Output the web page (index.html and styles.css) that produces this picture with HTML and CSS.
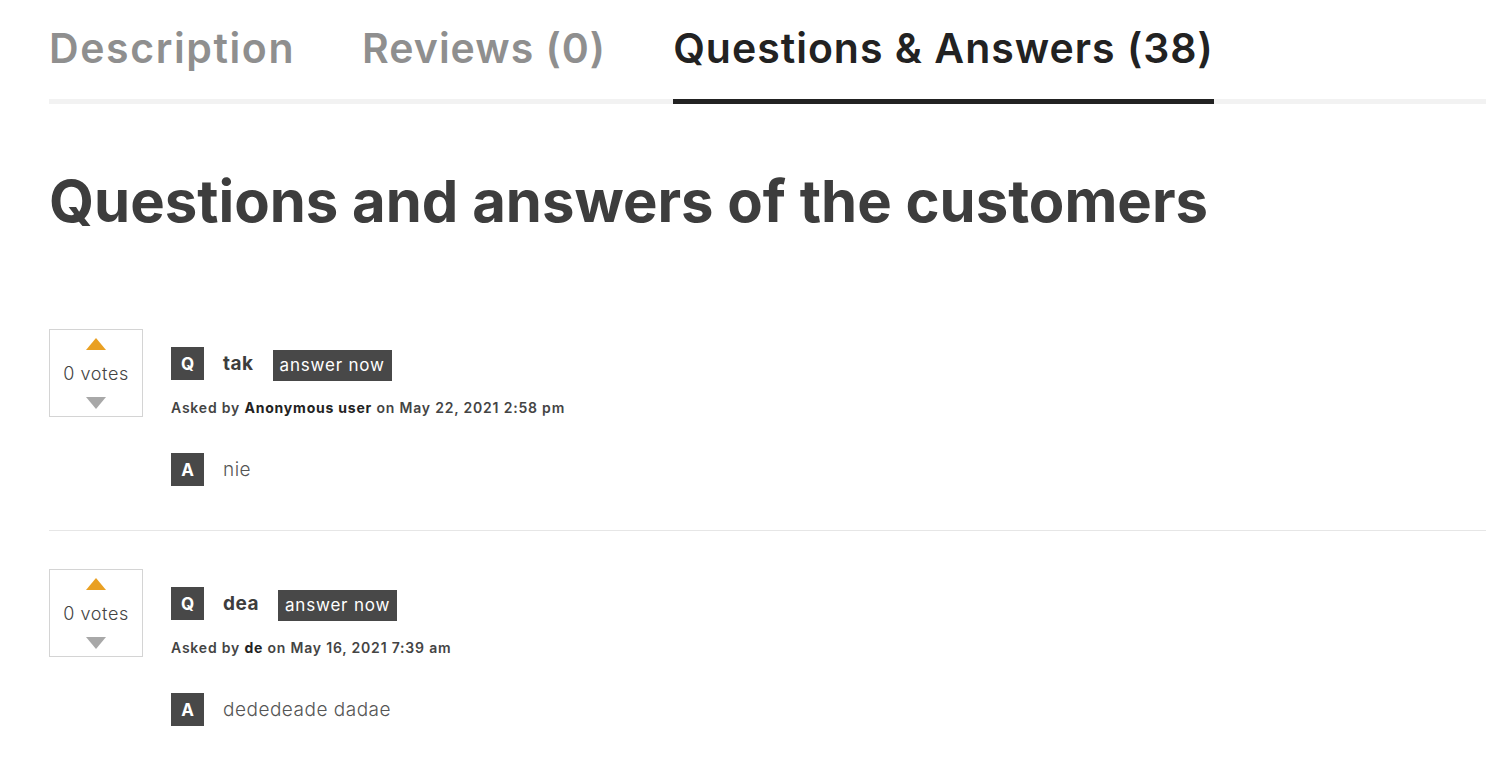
FILE: index.html
```html
<!DOCTYPE html>
<html lang="en">
<head>
    <meta charset="UTF-8">
    <meta name="viewport" content="width=device-width, initial-scale=1.0">
    <title>Questions &amp; Answers</title>
    <link rel="stylesheet" href="styles.css">
</head>
<body>
    <div class="product-tabs">
        <!-- Tab bar -->
        <div class="tabs">
            <a class="tab" href="#">Description</a>
            <a class="tab" href="#">Reviews (0)</a>
            <a class="tab active" href="#">Questions &amp; Answers (38)</a>
        </div>

        <h2 class="qa-title">Questions and answers of the customers</h2>

        <!-- Question list -->
        <div class="qa-list">
            <div class="qa-item">
                <div class="votes">
                    <span class="arrow up"></span>
                    <span class="count">0 votes</span>
                    <span class="arrow down"></span>
                </div>
                <div class="qa-body">
                    <div class="question">
                        <span class="badge">Q</span>
                        <span class="question-text">tak</span>
                        <a class="answer-now" href="#">answer now</a>
                    </div>
                    <div class="meta">Asked by <strong>Anonymous user</strong> on May 22, 2021 2:58 pm</div>
                    <div class="answer">
                        <span class="badge">A</span>
                        <span class="answer-text">nie</span>
                    </div>
                </div>
            </div>

            <div class="qa-item">
                <div class="votes">
                    <span class="arrow up"></span>
                    <span class="count">0 votes</span>
                    <span class="arrow down"></span>
                </div>
                <div class="qa-body">
                    <div class="question">
                        <span class="badge">Q</span>
                        <span class="question-text">dea</span>
                        <a class="answer-now" href="#">answer now</a>
                    </div>
                    <div class="meta">Asked by <strong>de</strong> on May 16, 2021 7:39 am</div>
                    <div class="answer">
                        <span class="badge">A</span>
                        <span class="answer-text">dededeade dadae</span>
                    </div>
                </div>
            </div>
        </div>
    </div>
</body>
</html>
```

FILE: styles.css
```css
body {
    margin: 0;
    padding: 0;
    background-color: #ffffff;
    font-family: 'Inter', 'DejaVu Sans', sans-serif;
    color: #444444;
}

.product-tabs {
    padding-left: 49px;
}

/* Tab bar */
.tabs {
    display: flex;
    align-items: flex-end;
    height: 99px;
    border-bottom: 5px solid #f2f2f2;
}

.tab {
    text-decoration: none;
    color: #8f8f8f;
    font-size: 41px;
    font-weight: 600;
    letter-spacing: 1px;
    line-height: 48px;
    padding-bottom: 27px;
    margin-right: 67px;
    border-bottom: 5px solid transparent;
    margin-bottom: -5px;
}

.tab:first-child {
    letter-spacing: 1.6px;
}

.tab.active {
    color: #222222;
    border-bottom-color: #222222;
}

/* Heading */
.qa-title {
    margin: 62px 0 0 0;
    font-size: 58px;
    font-weight: 700;
    line-height: 70px;
    color: #3d3d3d;
}

.qa-list {
    margin-top: 93px;
}

.qa-item {
    display: flex;
    align-items: flex-start;
    padding-bottom: 44px;
    margin-bottom: 38px;
    border-bottom: 1px solid #e6e6e6;
}

.qa-item:last-child {
    border-bottom: none;
}

/* Vote box */
.votes {
    width: 94px;
    height: 88px;
    border: 1px solid #d4d4d4;
    display: flex;
    flex-direction: column;
    align-items: center;
    justify-content: space-between;
    padding: 8px 0 7px 0;
    box-sizing: border-box;
}

.arrow {
    width: 0;
    height: 0;
    border-left: 10px solid transparent;
    border-right: 10px solid transparent;
}

.arrow.up {
    border-bottom: 12px solid #e9a023;
}

.arrow.down {
    border-top: 12px solid #a8a8a8;
}

.count {
    font-size: 18px;
    font-weight: 300;
    letter-spacing: 0.6px;
    color: #444444;
    line-height: 20px;
}

/* Question body */
.qa-body {
    margin-left: 28px;
    padding-top: 17px;
}

.question {
    display: flex;
    align-items: center;
}

.badge {
    display: inline-flex;
    align-items: center;
    justify-content: center;
    width: 33px;
    height: 33px;
    background-color: #484848;
    color: #ffffff;
    font-size: 17px;
    font-weight: 700;
}

.question-text {
    margin-left: 19px;
    font-size: 19px;
    font-weight: 700;
    letter-spacing: 0.5px;
    color: #3d3d3d;
}

.answer-now {
    margin-left: 19px;
    padding: 0 7px;
    height: 31px;
    line-height: 31px;
    background-color: #484848;
    color: #ffffff;
    text-decoration: none;
    font-size: 17px;
    font-weight: 400;
    letter-spacing: 0.8px;
    margin-top: 4px;
}

.meta {
    margin-top: 18px;
    font-size: 14px;
    font-weight: 600;
    letter-spacing: 0.8px;
    color: #444444;
}

.meta strong {
    color: #222222;
    font-weight: 700;
}

.answer {
    display: flex;
    align-items: center;
    margin-top: 37px;
}

.answer-text {
    margin-left: 19px;
    font-size: 19px;
    font-weight: 300;
    letter-spacing: 0.5px;
    color: #555555;
}
```
